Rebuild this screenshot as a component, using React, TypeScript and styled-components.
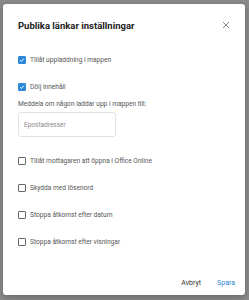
import * as React from "react";
import styled, { createGlobalStyle } from "styled-components";

const GlobalStyle = createGlobalStyle`
  html, body {
    margin: 0;
    padding: 0;
  }
  body {
    font-family: Roboto, "Liberation Sans", Arial, sans-serif;
    background: #8a8a8a;
  }
`;

const Backdrop = styled.div`
  width: 249px;
  height: 300px;
  box-sizing: border-box;
  padding: 4px 4px 5px 3px;
  background: #8a8a8a;
`;

const Dialog = styled.div`
  width: 242px;
  height: 291px;
  background: #fff;
  border-radius: 3px;
  box-shadow: 0 2px 6px rgba(0, 0, 0, 0.25);
  display: flex;
  flex-direction: column;
`;

const Header = styled.div`
  height: 42px;
  display: flex;
  align-items: center;
  justify-content: space-between;
  padding: 0 15px 0 15px;
`;

const Title = styled.h2`
  margin: 0;
  font-size: 9.5px;
  font-weight: 700;
  color: #222;
`;

const CloseButton = styled.button`
  border: none;
  background: none;
  padding: 0;
  width: 9px;
  height: 9px;
  display: flex;
  align-items: center;
  justify-content: center;
  cursor: pointer;
`;

const Body = styled.div`
  padding: 0 15px;
  display: flex;
  flex-direction: column;
`;

const Row = styled.label<{ $spaced?: boolean }>`
  height: 27px;
  display: flex;
  align-items: center;
  gap: 4px;
  margin-top: ${(p) => (p.$spaced ? "10px" : "0")};
  font-size: 6.6px;
  color: #555;
`;

const Box = styled.span<{ $checked?: boolean }>`
  width: 8px;
  height: 8px;
  box-sizing: border-box;
  border-radius: 1px;
  border: 1px solid ${(p) => (p.$checked ? "#2b88d8" : "#666")};
  background: ${(p) => (p.$checked ? "#2b88d8" : "#fff")};
  display: flex;
  align-items: center;
  justify-content: center;
  flex-shrink: 0;
`;

const FieldLabel = styled.div`
  font-size: 6.6px;
  line-height: 8px;
  color: #555;
`;

const Input = styled.div`
  margin-top: 4px;
  width: 98px;
  height: 25px;
  box-sizing: border-box;
  border: 1px solid #e3e3e3;
  border-radius: 3px;
  padding: 0 5px;
  display: flex;
  align-items: center;
  font-size: 6.5px;
  color: #8a8a8a;
`;

const Footer = styled.div`
  margin-top: auto;
  height: 24px;
  display: flex;
  align-items: center;
  justify-content: flex-end;
  gap: 16px;
  padding: 0 10px 0 0;
`;

const TextButton = styled.button<{ $primary?: boolean }>`
  border: none;
  background: none;
  padding: 0;
  font-family: inherit;
  font-size: 7px;
  color: ${(p) => (p.$primary ? "#2b88d8" : "#333")};
  cursor: pointer;
`;

const Check = () => (
  <svg width="6" height="6" viewBox="0 0 6 6">
    <path d="M1 3.2 L2.4 4.5 L5 1.5" fill="none" stroke="#fff" strokeWidth="0.9" />
  </svg>
);

const Option = ({ checked, spaced, children }: { checked?: boolean; spaced?: boolean; children: React.ReactNode }) => (
  <Row $spaced={spaced}>
    <Box $checked={checked}>{checked && <Check />}</Box>
    {children}
  </Row>
);

export default function App() {
  return (
    <>
      <GlobalStyle />
      <Backdrop>
        <Dialog>
          <Header>
            <Title>Publika länkar inställningar</Title>
            <CloseButton aria-label="Stäng">
              <svg width="8" height="8" viewBox="0 0 8 8">
                <path d="M1 1 L7 7 M7 1 L1 7" stroke="#8a8a8a" strokeWidth="1" />
              </svg>
            </CloseButton>
          </Header>
          <Body>
            <Option checked>Tillåt uppladdning i mappen</Option>
            <Option checked>Dölj innehåll</Option>
            <FieldLabel>Meddela om någon laddar upp i mappen till:</FieldLabel>
            <Input>Epostadresser</Input>
            <Option spaced>Tillåt mottagaren att öppna i Office Online</Option>
            <Option>Skydda med lösenord</Option>
            <Option>Stoppa åtkomst efter datum</Option>
            <Option>Stoppa åtkomst efter visningar</Option>
          </Body>
          <Footer>
            <TextButton>Avbryt</TextButton>
            <TextButton $primary>Spara</TextButton>
          </Footer>
        </Dialog>
      </Backdrop>
    </>
  );
}
